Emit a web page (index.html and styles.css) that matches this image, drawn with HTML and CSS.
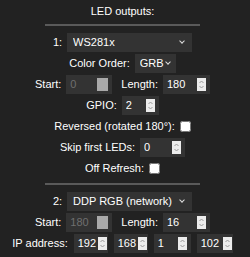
FILE: index.html
```html
<!DOCTYPE html>
<html lang="en">

<head>
    <meta charset="UTF-8">
    <title>LED outputs</title>
    <link rel="stylesheet" href="styles.css">
</head>

<body>
    <div class="title">LED outputs:</div>
    <hr class="sep">

    <div class="row">
        <span>1:</span>
        <span class="sel wide"><select><option>WS281x</option></select></span>
    </div>
    <div class="row">
        <span>Color Order:</span>
        <span class="sel"><select class="short"><option>GRB</option></select></span>
    </div>
    <div class="row">
        <span>Start:</span>
        <span class="num n46 off"><input value="0" disabled><svg class="spin" viewBox="0 0 11 13"><rect width="11" height="13" fill="#a9a9a9"/></svg></span>
        <span class="next">Length:</span>
        <span class="num n47"><input value="180"><svg class="spin" viewBox="0 0 9 13"><rect width="9" height="13" fill="#ececec"/><path d="M2.5 5L4.5 3L6.5 5M2.5 8L4.5 10L6.5 8" stroke="#999" fill="none"/></svg></span>
    </div>
    <div class="row">
        <span>GPIO:</span>
        <span class="num n37"><input value="2"><svg class="spin" viewBox="0 0 9 13"><rect width="9" height="13" fill="#ececec"/><path d="M2.5 5L4.5 3L6.5 5M2.5 8L4.5 10L6.5 8" stroke="#999" fill="none"/></svg></span>
    </div>
    <div class="row">
        <span>Reversed (rotated 180°):</span>
        <input type="checkbox">
    </div>
    <div class="row">
        <span>Skip first LEDs:</span>
        <span class="num n45"><input value="0"><svg class="spin" viewBox="0 0 9 13"><rect width="9" height="13" fill="#ececec"/><path d="M2.5 5L4.5 3L6.5 5M2.5 8L4.5 10L6.5 8" stroke="#999" fill="none"/></svg></span>
    </div>
    <div class="row">
        <span>Off Refresh:</span>
        <input type="checkbox">
    </div>

    <hr class="sep">

    <div class="row">
        <span>2:</span>
        <span class="sel wide"><select><option>DDP RGB (network)</option></select></span>
    </div>
    <div class="row">
        <span>Start:</span>
        <span class="num n46 off"><input value="180" disabled><svg class="spin" viewBox="0 0 11 13"><rect width="11" height="13" fill="#a9a9a9"/></svg></span>
        <span class="next">Length:</span>
        <span class="num n47"><input value="16"><svg class="spin" viewBox="0 0 9 13"><rect width="9" height="13" fill="#ececec"/><path d="M2.5 5L4.5 3L6.5 5M2.5 8L4.5 10L6.5 8" stroke="#999" fill="none"/></svg></span>
    </div>
    <div class="row ip">
        <span>IP address:</span>
        <span class="num n34 tight"><input value="192"><svg class="spin" viewBox="0 0 9 13"><rect width="9" height="13" fill="#ececec"/><path d="M2.5 5L4.5 3L6.5 5M2.5 8L4.5 10L6.5 8" stroke="#999" fill="none"/></svg></span>
        <span class="num n34 tight"><input value="168"><svg class="spin" viewBox="0 0 9 13"><rect width="9" height="13" fill="#ececec"/><path d="M2.5 5L4.5 3L6.5 5M2.5 8L4.5 10L6.5 8" stroke="#999" fill="none"/></svg></span>
        <span class="num n37"><input value="1"><svg class="spin" viewBox="0 0 9 13"><rect width="9" height="13" fill="#ececec"/><path d="M2.5 5L4.5 3L6.5 5M2.5 8L4.5 10L6.5 8" stroke="#999" fill="none"/></svg></span>
        <span class="num n36 tight"><input value="102"><svg class="spin" viewBox="0 0 9 13"><rect width="9" height="13" fill="#ececec"/><path d="M2.5 5L4.5 3L6.5 5M2.5 8L4.5 10L6.5 8" stroke="#999" fill="none"/></svg></span>
    </div>

    <hr class="sep">
</body>

</html>
```

FILE: styles.css
```css
body {
    margin: 0;
    padding: 0 5px 0 0;
    background: #222;
    color: #fff;
    font-family: "Liberation Sans", Arial, sans-serif;
    font-size: 11px;
}

.title {
    text-align: center;
    padding-top: 5px;
    height: 14px;
}

.sep {
    width: 155px;
    height: 2px;
    border: none;
    background: #5a5a5a;
    margin: 5px auto 6px;
}

.row {
    display: flex;
    justify-content: center;
    align-items: center;
    gap: 5px;
    height: 20px;
    margin-bottom: 1px;
}

.next {
    margin-left: 4px;
}

select {
    box-sizing: border-box;
    height: 19px;
    background: #333;
    color: #fff;
    border: none;
    border-radius: 0;
    font-family: inherit;
    font-size: 11px;
    outline: none;
}

input[type=checkbox] {
    width: 11px;
    height: 11px;
    margin: 0;
}

.sel {
    position: relative;
    display: inline-block;
}

.sel select {
    appearance: none;
    padding: 0 18px 0 6px;
}

.sel::after {
    content: "";
    position: absolute;
    right: 8px;
    top: 6px;
    width: 3px;
    height: 3px;
    border-right: 1px solid #ddd;
    border-bottom: 1px solid #ddd;
    transform: rotate(45deg);
    pointer-events: none;
}

.wide select {
    width: 125px;
}

.sel select.short {
    width: 41px;
    padding: 0 12px 0 5px;
}

.sel:has(.short)::after {
    right: 6px;
}

.num {
    box-sizing: border-box;
    display: inline-flex;
    align-items: center;
    height: 19px;
    background: #333;
    padding: 0 4px 0 4px;
}

.num input {
    flex: 1;
    min-width: 0;
    width: 0;
    border: none;
    background: transparent;
    color: #fff;
    font-family: inherit;
    font-size: 11px;
    padding: 0;
    outline: none;
}

.num input:disabled {
    color: #6f6f6f;
}

.num.tight {
    padding-right: 1px;
}

.num.tight input {
    margin-right: -3px;
}

.spin {
    width: 9px;
    height: 13px;
    flex: none;
    position: relative;
}

.off .spin {
    width: 11px;
}

.n34 { width: 34px; }
.n36 { width: 36px; }
.n37 { width: 37px; }
.n45 { width: 45px; }
.n46 { width: 46px; }
.n47 { width: 47px; }

.ip {
    gap: 6px;
}
```
